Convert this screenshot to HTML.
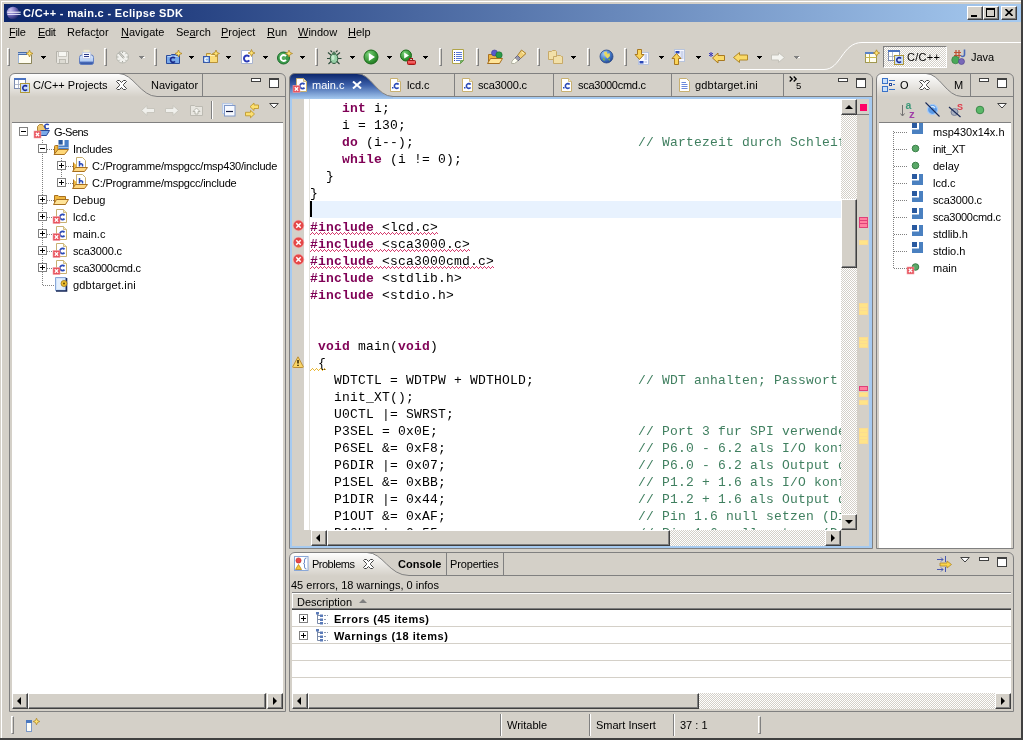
<!DOCTYPE html>
<html><head><meta charset="utf-8"><title>Eclipse</title>
<style>
*{box-sizing:border-box;margin:0;padding:0}
html,body{width:1023px;height:740px;overflow:hidden}
body{background:#d4d0c8;font:11px "Liberation Sans",sans-serif;color:#000;position:relative}
.a{position:absolute}
.t{position:absolute;white-space:nowrap;line-height:13px;height:13px}
u{text-decoration:underline}
.hd{position:absolute;width:3px;height:18px;top:48px;border-left:1px solid #fff;border-top:1px solid #fff;border-right:1px solid #808080;border-bottom:1px solid #808080}
.ar{position:absolute;top:56px;width:5px;height:1px;background:#000}
.ar::before{content:"";position:absolute;left:1px;top:1px;width:3px;height:1px;background:inherit}
.ar::after{content:"";position:absolute;left:2px;top:2px;width:1px;height:1px;background:inherit}
.ar.d{background:#808080;box-shadow:1px 1px 0 #fff}
.ic{position:absolute;width:16px;height:16px;top:49px}
.btn{position:absolute;background:#d4d0c8;border:1px solid;border-color:#fff #404040 #404040 #fff;box-shadow:inset -1px -1px 0 #808080}
.chk{background-image:conic-gradient(#fff 25%,#d4d0c8 0 50%,#fff 0 75%,#d4d0c8 0);background-size:2px 2px}
.code{position:absolute;font:13px "Liberation Mono",monospace;letter-spacing:0.2px;white-space:pre;line-height:17px;height:17px;left:310px;color:#000}
.code b{color:#7f0055}
.cm{position:absolute;font:13px "Liberation Mono",monospace;letter-spacing:0.2px;white-space:pre;line-height:17px;height:17px;left:638px;color:#3f7f5f}
.pm{position:absolute;width:9px;height:9px;border:1px solid #808080;background:#fff}
.pm i{position:absolute;left:1px;top:3px;width:5px;height:1px;background:#000}
.pm s{position:absolute;left:3px;top:1px;width:1px;height:5px;background:#000}
.gerr{width:12px;height:12px}
.gwarn{width:12px;height:12px}
.ovp{width:9px;height:5px;background:#ff80a0;border:1px solid #e0407a}
.ovy{width:9px;height:5px;background:#ffe488;border:1px solid #fbdc90}
.sep{position:absolute;top:714px;width:2px;height:22px;border-left:1px solid #808080;border-right:1px solid #fff}
#root{position:absolute;left:0;top:0;width:1023px;height:740px;will-change:transform}
</style></head><body><div id="root">
<!-- window frame -->
<div class="a" style="left:1px;top:1px;width:1020px;height:1px;background:#fff"></div>
<div class="a" style="left:1px;top:1px;width:1px;height:737px;background:#fff"></div>
<div class="a" style="left:1021px;top:0;width:2px;height:740px;background:#404040"></div>
<div class="a" style="left:0;top:738px;width:1023px;height:2px;background:#404040"></div>
<!-- title bar -->
<div class="a" id="title" style="left:4px;top:4px;width:1017px;height:18px;background:linear-gradient(90deg,#0a246a,#a6caf0)"></div>
<div class="t" style="left:23px;top:7px;color:#fff;font-weight:bold;letter-spacing:0.33px">C/C++ - main.c - Eclipse SDK</div>
<!-- menu -->
<div id="menu">
<div class="t" style="left:9px;top:26px;letter-spacing:-.3px"><u>F</u>ile</div>
<div class="t" style="left:38px;top:26px;letter-spacing:-.4px"><u>E</u>dit</div>
<div class="t" style="left:67px;top:26px">Refac<u>t</u>or</div>
<div class="t" style="left:121px;top:26px"><u>N</u>avigate</div>
<div class="t" style="left:176px;top:26px">Se<u>a</u>rch</div>
<div class="t" style="left:221px;top:26px"><u>P</u>roject</div>
<div class="t" style="left:267px;top:26px"><u>R</u>un</div>
<div class="t" style="left:298px;top:26px"><u>W</u>indow</div>
<div class="t" style="left:348px;top:26px"><u>H</u>elp</div>
</div>
<!-- title buttons -->
<div class="btn" style="left:967px;top:6px;width:16px;height:14px"><div class="a" style="left:3px;top:8px;width:6px;height:2px;background:#000"></div></div>
<div class="btn" style="left:983px;top:6px;width:16px;height:14px"><div class="a" style="left:2px;top:1px;width:9px;height:9px;border:1px solid #000;border-top-width:2px"></div></div>
<div class="btn" style="left:1001px;top:6px;width:16px;height:14px"><svg class="a" style="left:3px;top:2px" width="8" height="7" viewBox="0 0 8 7"><path d="M0.5 0L7.5 7M7.5 0L0.5 7" stroke="#000" stroke-width="1.6" fill="none"/></svg></div>
<svg class="a" style="left:5px;top:5px" width="17" height="16" viewBox="0 0 17 16"><defs><radialGradient id="eg" cx=".3" cy=".25" r=".85"><stop offset="0" stop-color="#c8c0f0"/><stop offset=".5" stop-color="#7068b8"/><stop offset="1" stop-color="#141e60"/></radialGradient></defs><circle cx="8" cy="8" r="6.300" fill="url(#eg)"/><rect x="2.200" y="6.700" width="13.500" height="1" fill="#fff"/><rect x="2.500" y="8.900" width="13.200" height="1" fill="#e8e8ff"/></svg>
<!-- toolbar -->
<div id="toolbar">
<div class="hd" style="left:7px"></div>
<div class="ic" id="i_new" style="left:17px"><svg width="16" height="16" viewBox="0 0 16 16" style="display:block;overflow:visible"><rect x="1.500" y="3.500" width="13" height="11" fill="#fffdf0" stroke="#d8d0a0"/><path d="M1.500 14.500H14.500V6" stroke="#8a845a" fill="none"/><path d="M1.500 14V3.500" stroke="#9ab4dc"/><rect x="1" y="3" width="9" height="1" fill="#4a6ea8"/><rect x="1" y="5" width="9" height="1" fill="#4a6ea8"/><rect x="1" y="4" width="9" height="1" fill="#a8c0e8"/><path d="M12.5 1.0L13.5 3.5L16.0 4.5L13.5 5.5L12.5 8.0L11.5 5.5L9.0 4.5L11.5 3.5Z" fill="#ffe470" stroke="#b08828" stroke-width=".8"/></svg></div><div class="ar" style="left:41px"></div>
<div class="ic" id="i_save" style="left:55px"><svg width="16" height="16" viewBox="0 0 16 16" style="display:block;overflow:visible"><path d="M1.500 2.500H13.500V14.500H2.500L1.500 13.500Z" fill="#e8e6e0" stroke="#b4b2aa"/><rect x="3.500" y="2.500" width="8" height="5" fill="#f6f6f2" stroke="#c0beb6" stroke-width=".8"/><rect x="4.500" y="10.500" width="6" height="4" fill="#dcdad2" stroke="#b4b2aa" stroke-width=".8"/></svg></div>
<div class="ic" id="i_print" style="left:79px"><svg width="16" height="16" viewBox="0 0 16 16" style="display:block;overflow:visible"><defs><linearGradient id="pg" x1="0" y1="0" x2="0" y2="1"><stop offset="0" stop-color="#dce8fc"/><stop offset=".62" stop-color="#b4cef4"/><stop offset=".78" stop-color="#4668b8"/><stop offset="1" stop-color="#34549c"/></linearGradient></defs><path d="M4.500 4V.8H10.500V4Z" fill="#f4f0d0" opacity=".75"/><path d="M.5 8.500Q.5 6 3 6H12.500Q14.500 6 14.500 8.500V13.500Q14.500 15.500 12.500 15.500H2.500Q.5 15.500 .5 13.500Z" fill="url(#pg)" stroke="#5a78c0" stroke-width=".9"/><rect x="3.500" y="3.500" width="8" height="6" fill="#f6f8ff" stroke="#c0cce8" stroke-width=".8"/><path d="M5 5.500H10M5 7.500H10" stroke="#2a3a88" stroke-width="1"/></svg></div>
<div class="hd" style="left:104px"></div>
<div class="ic" id="i_build" style="left:115px"><svg width="16" height="16" viewBox="0 0 16 16" style="display:block;overflow:visible"><circle cx="7.500" cy="8" r="6" fill="#f2f2ee" stroke="#b8b8b0"/><path d="M7.500 2.500V4M7.500 12V13.500M2 8H3.500M11.500 8H13M3.600 4.100L4.700 5.200M11.400 4.100L10.300 5.200M3.600 11.900L4.700 10.800M11.400 11.900L10.300 10.800" stroke="#a8a8a0"/><path d="M4 3.500L9 9" stroke="#a0a098" stroke-width="2"/><path d="M4 3.500L9 9" stroke="#e8e8e4" stroke-width=".8"/></svg></div><div class="ar d" style="left:139px"></div>
<div class="hd" style="left:154px"></div>
<div class="ic" id="i_newcprj" style="left:166px"><svg width="16" height="16" viewBox="0 0 16 16" style="display:block;overflow:visible"><path d="M.5 6.500H4.500L5.500 5.500H9.500L10.500 6.500H13.500V14.500H.5Z" fill="#7aaaea" stroke="#2a4a9a"/><path d="M1.500 7.500H12.500" stroke="#b8d4f8"/><path d="M8.92 9.19A2.5 2.5 0 1 0 8.92 12.41" fill="none" stroke="#1a2a8a" stroke-width="1.7"/><path d="M12.5 1.0L13.5 3.5L16.0 4.5L13.5 5.5L12.5 8.0L11.5 5.5L9.0 4.5L11.5 3.5Z" fill="#ffe470" stroke="#b08828" stroke-width=".8"/></svg></div><div class="ar" style="left:189px"></div>
<div class="ic" id="i_newfld" style="left:203px"><svg width="16" height="16" viewBox="0 0 16 16" style="display:block;overflow:visible"><path d="M3.500 4.500H7.500L8.500 5.500H14.500V13.500H3.500Z" fill="#fadc78" stroke="#b8923a"/><path d="M4.500 6.500H13.500" stroke="#fff0b0"/><rect x=".5" y="7.500" width="6" height="6" fill="#8ab4ec" stroke="#3a5aa8"/><path d="M4.90 9.41A1.7 1.7 0 1 0 4.90 11.59" fill="none" stroke="#fff" stroke-width="1.2"/><path d="M13 1.0L14 3.5L16.5 4.5L14 5.5L13 8.0L12 5.5L9.5 4.5L12 3.5Z" fill="#ffe470" stroke="#b08828" stroke-width=".8"/></svg></div><div class="ar" style="left:226px"></div>
<div class="ic" id="i_newcfile" style="left:240px"><svg width="16" height="16" viewBox="0 0 16 16" style="display:block;overflow:visible"><path d="M1.500 1.500H9.500L12.500 4.500V14.500H1.500Z" fill="#fff" stroke="#a8b4d0"/><path d="M9.30 7.57A3 3 0 1 0 9.30 11.43" fill="none" stroke="#2a3ab8" stroke-width="2"/><path d="M11.5 0.5L12.5 3L15.0 4L12.5 5L11.5 7.5L10.5 5L8.0 4L10.5 3Z" fill="#ffe470" stroke="#b08828" stroke-width=".8"/></svg></div><div class="ar" style="left:263px"></div>
<div class="ic" id="i_newclass" style="left:277px"><svg width="16" height="16" viewBox="0 0 16 16" style="display:block;overflow:visible"><circle cx="6.500" cy="9" r="6" fill="#3a9a4a" stroke="#1a6a2a"/><circle cx="5.500" cy="7.500" r="3.500" fill="#6ac070" opacity=".5"/><path d="M9.00 7.07A3 3 0 1 0 9.00 10.93" fill="none" stroke="#fff" stroke-width="1.9"/><path d="M12 1.0L13 3.5L15.5 4.5L13 5.5L12 8.0L11 5.5L8.5 4.5L11 3.5Z" fill="#ffe470" stroke="#b08828" stroke-width=".8"/></svg></div><div class="ar" style="left:300px"></div>
<div class="hd" style="left:315px"></div>
<div class="ic" id="i_debug" style="left:326px"><svg width="16" height="16" viewBox="0 0 16 16" style="display:block;overflow:visible"><path d="M8 4.500V2.500M5 6L2 3.500M11 6L14 3.500M4.500 9.500H1M11.500 9.500H15.500M5 12.500L2.500 15M11 12.500L13.500 15M6 3L4.500 1.500M10 3L11.500 1.500" stroke="#2a4a3a" stroke-width="1.100" fill="none"/><ellipse cx="8" cy="9.500" rx="3.800" ry="5" fill="#98d0a8" stroke="#2a5a3a"/><ellipse cx="8" cy="4.500" rx="2" ry="1.500" fill="#4a7a5a"/><ellipse cx="7" cy="8.500" rx="1.500" ry="2.500" fill="#c8ecd0"/></svg></div><div class="ar" style="left:350px"></div>
<div class="ic" id="i_run" style="left:363px"><svg width="16" height="16" viewBox="0 0 16 16" style="display:block;overflow:visible"><defs><radialGradient id="rg" cx=".35" cy=".3" r=".8"><stop offset="0" stop-color="#7ad07a"/><stop offset=".6" stop-color="#3a9a3a"/><stop offset="1" stop-color="#1a701a"/></radialGradient></defs><circle cx="8" cy="8" r="7" fill="url(#rg)" stroke="#1a6a1a"/><path d="M5.800 4L12 8L5.800 12Z" fill="#fff"/></svg></div><div class="ar" style="left:387px"></div>
<div class="ic" id="i_ext" style="left:400px"><svg width="16" height="16" viewBox="0 0 16 16" style="display:block;overflow:visible"><circle cx="6" cy="6.500" r="5.500" fill="url(#rg)" stroke="#1a6a1a"/><path d="M4.200 3.500L9 6.500L4.200 9.500Z" fill="#fff"/><rect x="9.500" y="9.500" width="3" height="2" fill="none" stroke="#a01818"/><rect x="7.500" y="11.500" width="8" height="4" rx="1" fill="#e83838" stroke="#a01818"/><path d="M8 13H15" stroke="#f8a0a0" stroke-width=".8"/></svg></div><div class="ar" style="left:423px"></div>
<div class="hd" style="left:439px"></div>
<div class="ic" id="i_doc" style="left:450px"><svg width="16" height="16" viewBox="0 0 16 16" style="display:block;overflow:visible"><path d="M2.500 .5H13.500V11.500L10.500 14.500H2.500Z" fill="#fff" stroke="#b0a448"/><path d="M13.500 11.500H10.500V14.500Z" fill="#7ab868" stroke="#5a9848" stroke-width=".8"/><path d="M6 3.500H12M6 5.500H12M6 7.500H12M6 9.500H12M6 11.500H10" stroke="#5a7ad8"/><path d="M4 3.500H5M4 5.500H5M4 7.500H5M4 9.500H5M4 11.500H5" stroke="#2a3a98"/></svg></div>
<div class="hd" style="left:476px"></div>
<div class="ic" id="i_opentype" style="left:487px"><svg width="16" height="16" viewBox="0 0 16 16" style="display:block;overflow:visible"><path d="M1.500 5.500H5L6 6.500H12.500V14H1.500Z" fill="#f0b840" stroke="#a87020"/><circle cx="7.500" cy="4" r="3" fill="#5a5acc" stroke="#3a3a98" stroke-width=".6"/><circle cx="12" cy="6" r="3.200" fill="#2a9a4a" stroke="#1a6a2a" stroke-width=".6"/><path d="M.5 14.500L3.500 9.500H15.500L12.500 14.500Z" fill="#ffe498" stroke="#a87020"/></svg></div>
<div class="ic" id="i_wand" style="left:511px"><svg width="16" height="16" viewBox="0 0 16 16" style="display:block;overflow:visible"><path d="M10.500 1L15 4.500L9.500 9.500L6.500 6.500Z" fill="#f0d078" stroke="#a88030"/><path d="M6.500 6.500L9.500 9.500L7 12L4 9Z" fill="#9898b0" stroke="#686880"/><path d="M4 9L7 12L3.500 14.500L.5 14.500L1 12Z" fill="#fffff4" stroke="#b0b0a0"/><path d="M11 3L13 4.500" stroke="#fff4c0"/></svg></div>
<div class="hd" style="left:537px"></div>
<div class="ic" id="i_fld" style="left:548px"><svg width="16" height="16" viewBox="0 0 16 16" style="display:block;overflow:visible"><path d="M.5 2.500H3.500L4.500 1.500H7.500L8.500 2.500V10.500H.5Z" fill="#f2e0a8" stroke="#c8aa68"/><path d="M5.500 7.500H8.500L9.500 6.500H12.500L13.500 7.500H14.500V14.500H5.500Z" fill="#f2e0a8" stroke="#c8aa68"/></svg></div><div class="ar" style="left:571px"></div>
<div class="hd" style="left:587px"></div>
<div class="ic" id="i_globe" style="left:599px"><svg width="16" height="16" viewBox="0 0 16 16" style="display:block;overflow:visible"><defs><radialGradient id="gg" cx=".35" cy=".3" r=".8"><stop offset="0" stop-color="#a8d0f8"/><stop offset=".5" stop-color="#4a82d0"/><stop offset="1" stop-color="#1a3a88"/></radialGradient></defs><circle cx="7.500" cy="7.500" r="6.500" fill="url(#gg)" stroke="#2a4a88" stroke-width=".8"/><path d="M5 3L7.500 2.500L8.500 5L10.500 4L11 7L8.500 9.500L7 8L5.500 6Z" fill="#e8d860"/><path d="M4 8.500L6 10L5.500 12L4 11Z" fill="#7ab848"/><path d="M9 10.500L11 9.500L10.500 12Z" fill="#7ab848"/></svg></div>
<div class="hd" style="left:624px"></div>
<div class="ic" id="i_nexta" style="left:635px"><svg width="16" height="16" viewBox="0 0 16 16" style="display:block;overflow:visible"><rect x="3.500" y="3.500" width="10" height="12" fill="#f8f8ff" stroke="#b8c4dc"/><path d="M9.500 6H12M9.500 8H12M9.500 10H12M9.500 13H12" stroke="#8aa0d0" stroke-width=".8"/><rect x="4.500" y="12" width="4" height="2.500" fill="#2a48b8"/><path d="M2.500 .5H6.500V5.500H9L4.500 10.500L0 5.500H2.500Z" fill="#fad458" stroke="#a87820"/></svg></div><div class="ar" style="left:659px"></div>
<div class="ic" id="i_preva" style="left:672px"><svg width="16" height="16" viewBox="0 0 16 16" style="display:block;overflow:visible"><rect x="2.500" y=".5" width="10" height="12" fill="#f8f8ff" stroke="#b8c4dc"/><path d="M8.500 3H11.500M8.500 5H11.500M8.500 7H11.500M8.500 9H11.500" stroke="#8aa0d0" stroke-width=".8"/><rect x="3.500" y="2" width="4" height="2.500" fill="#2a48b8"/><path d="M4.500 4.500L9 9.500H6.500V15.500H2.500V9.500H0Z" fill="#fad458" stroke="#a87820"/></svg></div><div class="ar" style="left:696px"></div>
<div class="ic" id="i_lastedit" style="left:709px"><svg width="16" height="16" viewBox="0 0 16 16" style="display:block;overflow:visible"><path d="M2 3V8M0 4.200L4 6.800M4 4.200L0 6.800" stroke="#3a3ab8" stroke-width="1"/><path d="M3.500 9L9 4V6.500H15.500V11.500H9V14Z" fill="#fada68" stroke="#a87820"/></svg></div>
<div class="ic" id="i_back" style="left:733px"><svg width="16" height="16" viewBox="0 0 16 16" style="display:block;overflow:visible"><path d="M.5 8.500L6.500 3.500V6H14.500V11H6.500V13.500Z" fill="#fada68" stroke="#b08828"/></svg></div><div class="ar" style="left:757px"></div>
<div class="ic" id="i_fwd" style="left:770px"><svg width="16" height="16" viewBox="0 0 16 16" style="display:block;overflow:visible"><path d="M14.500 8.500L8.500 3.500V6H1.500V11H8.500V13.500Z" fill="#f4f4f0" stroke="#c4c2ba"/></svg></div><div class="ar d" style="left:794px"></div>
</div>
<!-- perspective bar -->
<svg class="a" style="left:740px;top:40px" width="281" height="33" viewBox="0 0 281 33"><path d="M0 29.5H84C101 29.5 102 2.5 122 2.5H281" fill="none" stroke="#fff" stroke-width="1"/></svg>
<div class="ic" id="i_openpersp" style="left:864px"><svg width="16" height="16" viewBox="0 0 16 16" style="display:block;overflow:visible"><rect x="1.500" y="3.500" width="11" height="10" fill="#fffef0" stroke="#a09850"/><rect x="1" y="3" width="12" height="2" fill="#5a82c8"/><path d="M1.500 8.500H12.500M5.500 5V13.500" stroke="#c8b850"/><path d="M12.5 0.7999999999999998L13.5 3L15.7 4L13.5 5L12.5 7.2L11.5 5L9.3 4L11.5 3Z" fill="#ffe470" stroke="#b08828" stroke-width=".8"/></svg></div>
<div class="a chk" style="left:883px;top:46px;width:64px;height:22px;border:1px solid;border-color:#808080 #fff #fff #808080"></div>
<div class="ic" id="i_cpersp" style="left:888px"><svg width="16" height="16" viewBox="0 0 16 16" style="display:block;overflow:visible"><rect x=".5" y="1.500" width="11" height="10" fill="#fff" stroke="#7a8ab0"/><rect x="0" y="1" width="12" height="2" fill="#4a72c0"/><path d="M4.500 3V11.500M.5 7.500H11.500" stroke="#a0a8c0" stroke-width=".8"/><rect x="6.500" y="6.500" width="9" height="9" fill="#c8dcf8" stroke="#b09838"/><path d="M13.04 9.46A2.4 2.4 0 1 0 13.04 12.54" fill="none" stroke="#1a2a98" stroke-width="1.6"/></svg></div>
<div class="t" style="left:907px;top:51px;letter-spacing:.3px">C/C++</div>
<div class="ic" id="i_java" style="left:951px"><svg width="16" height="16" viewBox="0 0 16 16" style="display:block;overflow:visible"><path d="M3 3.500H10M3 6.500H10M5 1V9M8 1V9" stroke="#c05030" stroke-width="1.200"/><path d="M13.500 .5V5.500Q13.500 7.500 11.500 7.500Q10.500 7.500 10 6.500" fill="none" stroke="#4a6ab8" stroke-width="1.600"/><circle cx="4.500" cy="11" r="3.800" fill="#4aa858" stroke="#2a7838" stroke-width=".6"/><circle cx="10.500" cy="12.500" r="3" fill="#7868b8" stroke="#4a3a88" stroke-width=".6"/></svg></div>
<div class="t" style="left:971px;top:51px">Java</div>
<!--TOOLBAR_END-->
<!-- LEFT PANEL -->
<div id="left">
<svg class="a" style="left:9px;top:73px" width="278" height="640" viewBox="0 0 278 640">
<defs><linearGradient id="tg" x1="0" y1="0" x2="0" y2="1"><stop offset="0" stop-color="#ffffff"/><stop offset="1" stop-color="#d4d0c8"/></linearGradient></defs>
<path d="M0.5 24V6C0.5 2.5 3 0.5 6 0.5H110C124 0.5 132 23.5 148 23.5H0.5Z" fill="url(#tg)"/>
<path d="M0.5 638.5V6C0.5 2.5 3 0.5 6 0.5H271C274 0.5 276.5 2.5 276.5 6V638.5Z" fill="none" stroke="#808080"/>
<path d="M110 0.5C124 0.5 132 23.5 148 23.5H276.5" fill="none" stroke="#808080"/>
<path d="M193.5 1V23" stroke="#808080"/>
</svg>
<div class="ic" id="i_cprojects" style="left:14px;top:77px"><svg width="16" height="16" viewBox="0 0 16 16" style="display:block;overflow:visible"><rect x=".5" y="1.500" width="11" height="10" fill="#fff" stroke="#7a8ab0"/><rect x="0" y="1" width="12" height="2" fill="#4a72c0"/><path d="M4.500 3V11.500M.5 7.500H11.500" stroke="#a0a8c0" stroke-width=".8"/><rect x="6.500" y="6.500" width="9" height="9" fill="#c8dcf8" stroke="#b09838"/><path d="M13.04 9.46A2.4 2.4 0 1 0 13.04 12.54" fill="none" stroke="#1a2a98" stroke-width="1.6"/></svg></div>
<div class="t" style="left:33px;top:79px">C/C++ Projects</div>
<svg class="a" id="x_left" style="left:116px;top:80px" width="11" height="10" viewBox="0 0 11 10"><path d="M1.5 .5H3.5L5.5 2.5L7.5 .5H9.5L10.5 1.5L7.5 4.5V5.5L10.5 8.5L9.5 9.5H7.5L5.5 7.5L3.5 9.5H1.5L.5 8.5L3.5 5.5V4.5L.5 1.5Z" fill="#fff" stroke="#404040" stroke-width="1"/></svg>
<div class="t" style="left:151px;top:79px">Navigator</div>
<div class="a" style="left:251px;top:78px;width:10px;height:4px;border:1px solid #404040;background:#fff"></div>
<div class="a" style="left:269px;top:78px;width:10px;height:10px;border:1px solid #404040;border-top-width:2px;background:#fff"></div>
<!-- view toolbar -->
<div class="ic" id="i_vback" style="left:140px;top:102px"><svg width="16" height="16" viewBox="0 0 16 16" style="display:block;overflow:visible"><path d="M1.500 8.500L7 3.500V6.500H14.500V10.500H7V13.500Z" fill="#f0f0ec" stroke="#c8c6be"/></svg></div>
<div class="ic" id="i_vfwd" style="left:164px;top:102px"><svg width="16" height="16" viewBox="0 0 16 16" style="display:block;overflow:visible"><path d="M14.500 8.500L9 3.500V6.500H1.500V10.500H9V13.500Z" fill="#f0f0ec" stroke="#c8c6be"/></svg></div>
<div class="ic" id="i_vup" style="left:189px;top:102px"><svg width="16" height="16" viewBox="0 0 16 16" style="display:block;overflow:visible"><path d="M1.500 3.500H5.500L6.500 4.500H13.500V13.500H1.500Z" fill="#e8e6e0" stroke="#bcbab2"/><path d="M7.500 6L11 9.500H9V12H6V9.500H4Z" fill="#f8f8f4" stroke="#a8a8a0" stroke-width=".8"/></svg></div>
<div class="a" style="left:211px;top:101px;width:2px;height:18px;border-left:1px solid #808080;border-right:1px solid #fff"></div>
<div class="ic" id="i_collapse" style="left:221px;top:102px"><svg width="16" height="16" viewBox="0 0 16 16" style="display:block;overflow:visible"><rect x="1.500" y="1.500" width="10" height="10" fill="#e4ecf8" stroke="#b8c8e4"/><rect x="3.500" y="3.500" width="10.500" height="10.500" fill="#f8faff" stroke="#8098c8"/><path d="M5 9.500H12" stroke="#101840" stroke-width="1.200"/></svg></div>
<div class="ic" id="i_link" style="left:244px;top:102px"><svg width="16" height="16" viewBox="0 0 16 16" style="display:block;overflow:visible"><path d="M6 4.700L10 1V3H14.500V6.500H10V8.500Z" fill="#fce070" stroke="#c09830" stroke-width=".9"/><path d="M10.500 12L6.500 8.300V10.300H1.500V13.800H6.500V15.800Z" fill="#fce070" stroke="#c09830" stroke-width=".9"/></svg></div>
<svg class="a" style="left:269px;top:103px" width="10" height="6" viewBox="0 0 10 6"><path d="M.7 .5H9.3L5 5Z" fill="#fff" stroke="#404040"/></svg>
<!-- tree -->
<div class="a" style="left:12px;top:122px;width:271px;height:571px;border-top:1px solid #808080;background:#fff"></div>
<div id="tree">
<svg class="a" style="left:12px;top:122px" width="100" height="175" viewBox="0 0 100 175" shape-rendering="crispEdges">
<g stroke="#808080" stroke-dasharray="1 1" fill="none">
<path d="M30.5 18V163M30.5 27.5H44M30.5 78.5H44M30.5 95.5H44M30.5 112.5H44M30.5 129.5H44M30.5 146.5H44M30.5 163.5H44"/>
<path d="M49.5 36V61M49.5 44.5H63M49.5 61.5H63"/>
</g>
</svg>
<div class="pm" style="left:19px;top:127px"><i></i></div>
<div class="pm" style="left:38px;top:144px"><i></i></div>
<div class="pm p" style="left:57px;top:161px"><i></i><s></s></div>
<div class="pm p" style="left:57px;top:178px"><i></i><s></s></div>
<div class="pm p" style="left:38px;top:195px"><i></i><s></s></div>
<div class="pm p" style="left:38px;top:212px"><i></i><s></s></div>
<div class="pm p" style="left:38px;top:229px"><i></i><s></s></div>
<div class="pm p" style="left:38px;top:246px"><i></i><s></s></div>
<div class="pm p" style="left:38px;top:263px"><i></i><s></s></div>
<div class="ic ti_prj" style="left:34px;top:123px"><svg width="16" height="16" viewBox="0 0 16 16" style="display:block;overflow:visible"><path d="M3.500 3.500L5.500 1.500H8.500L9.500 3.500H11.500V8H3.500Z" fill="#f0c870" stroke="#b08838"/><path d="M4 12.500L6.500 7.500H15.500L12.500 12.500Z" fill="#7aaaea" stroke="#2a4a9a"/><path d="M14.76 2.02A2.3 2.3 0 1 0 14.76 4.98" fill="none" stroke="#2a4ab8" stroke-width="1.5"/><rect x="0" y="8" width="7" height="7" fill="#e8505a" stroke="#f0a0a8" stroke-width=".6"/><path d="M1.8 9.8L5.2 13.2M5.2 9.8L1.8 13.2" stroke="#fff" stroke-width="1.3"/></svg></div><div class="t" style="left:54px;top:126px;letter-spacing:-0.55px">G-Sens</div>
<div class="ic ti_inc" style="left:53px;top:140px"><svg width="16" height="16" viewBox="0 0 16 16" style="display:block;overflow:visible"><path d="M1.500 6.500Q1.500 5.500 2.500 5.500H5V14H1.500Z" fill="#f0b840" stroke="#a87020"/><rect x="5.500" y="0" width="4.200" height="4.600" fill="#2a5aa0"/><path d="M11.500 0H15.700V9H5.500V5.500H11.500Z" fill="#4a80c8"/><path d="M5.500 7.500H15.700" stroke="#c8dcf4" stroke-width=".7"/><path d="M1 14.500L5 9.500H15.500L11.500 14.500Z" fill="#ffd878" stroke="#a87020"/></svg></div><div class="t" style="left:73px;top:143px;letter-spacing:-0.2px">Includes</div>
<div class="ic ti_incf" style="left:72px;top:157px"><svg width="16" height="16" viewBox="0 0 16 16" style="display:block;overflow:visible"><path d="M1.500 5.500V14H11.500" fill="#f0b840" stroke="#a87020"/><path d="M4.500 .5H10.500L13.500 3.500V11.500H4.500Z" fill="#fff" stroke="#c8b070"/><path d="M7.500 4V9.500M7.500 7.500Q9 6 10.500 7.500V9.500" stroke="#2a4ab8" stroke-width="1.500" fill="none"/><path d="M.5 14.500L3.500 10.500H15.500L12.500 14.500Z" fill="#ffd880" stroke="#a87020"/></svg></div><div class="t" style="left:92px;top:160px;letter-spacing:-0.22px">C:/Programme/mspgcc/msp430/include</div>
<div class="ic ti_incf" style="left:72px;top:174px"><svg width="16" height="16" viewBox="0 0 16 16" style="display:block;overflow:visible"><path d="M1.500 5.500V14H11.500" fill="#f0b840" stroke="#a87020"/><path d="M4.500 .5H10.500L13.500 3.500V11.500H4.500Z" fill="#fff" stroke="#c8b070"/><path d="M7.500 4V9.500M7.500 7.500Q9 6 10.500 7.500V9.500" stroke="#2a4ab8" stroke-width="1.500" fill="none"/><path d="M.5 14.500L3.500 10.500H15.500L12.500 14.500Z" fill="#ffd880" stroke="#a87020"/></svg></div><div class="t" style="left:92px;top:177px;letter-spacing:-0.22px">C:/Programme/mspgcc/include</div>
<div class="ic ti_fld" style="left:53px;top:191px"><svg width="16" height="16" viewBox="0 0 16 16" style="display:block;overflow:visible"><path d="M1.500 4.500H5L6 5.500H12.500V13H1.500Z" fill="#f0b840" stroke="#a87020"/><path d="M.5 13.500L3.500 8.500H15.500L12.500 13.500Z" fill="#ffe498" stroke="#a87020"/></svg></div><div class="t" style="left:73px;top:194px">Debug</div>
<div class="ic ti_cerr" style="left:53px;top:208px"><svg width="16" height="16" viewBox="0 0 16 16" style="display:block;overflow:visible"><path d="M3.5 1.500H10.5L13.5 4.500V14.500H3.5Z" fill="#fff" stroke="#c8b070"/><path d="M10.5 1.500V4.500H13.5" fill="#f0e8c0" stroke="#c8b070" stroke-width=".8"/><path d="M11.49 7.33A2.6 2.6 0 1 0 11.49 10.67" fill="none" stroke="#2a4ab8" stroke-width="1.7"/><rect x="0" y="8.5" width="7" height="7" fill="#e8505a" stroke="#f0a0a8" stroke-width=".6"/><path d="M1.8 10.3L5.2 13.7M5.2 10.3L1.8 13.7" stroke="#fff" stroke-width="1.3"/></svg></div><div class="t" style="left:73px;top:211px">lcd.c</div>
<div class="ic ti_cerr" style="left:53px;top:225px"><svg width="16" height="16" viewBox="0 0 16 16" style="display:block;overflow:visible"><path d="M3.5 1.500H10.5L13.5 4.500V14.500H3.5Z" fill="#fff" stroke="#c8b070"/><path d="M10.5 1.500V4.500H13.5" fill="#f0e8c0" stroke="#c8b070" stroke-width=".8"/><path d="M11.49 7.33A2.6 2.6 0 1 0 11.49 10.67" fill="none" stroke="#2a4ab8" stroke-width="1.7"/><rect x="0" y="8.5" width="7" height="7" fill="#e8505a" stroke="#f0a0a8" stroke-width=".6"/><path d="M1.8 10.3L5.2 13.7M5.2 10.3L1.8 13.7" stroke="#fff" stroke-width="1.3"/></svg></div><div class="t" style="left:73px;top:228px">main.c</div>
<div class="ic ti_cerr" style="left:53px;top:242px"><svg width="16" height="16" viewBox="0 0 16 16" style="display:block;overflow:visible"><path d="M3.5 1.500H10.5L13.5 4.500V14.500H3.5Z" fill="#fff" stroke="#c8b070"/><path d="M10.5 1.500V4.500H13.5" fill="#f0e8c0" stroke="#c8b070" stroke-width=".8"/><path d="M11.49 7.33A2.6 2.6 0 1 0 11.49 10.67" fill="none" stroke="#2a4ab8" stroke-width="1.7"/><rect x="0" y="8.5" width="7" height="7" fill="#e8505a" stroke="#f0a0a8" stroke-width=".6"/><path d="M1.8 10.3L5.2 13.7M5.2 10.3L1.8 13.7" stroke="#fff" stroke-width="1.3"/></svg></div><div class="t" style="left:73px;top:245px;letter-spacing:-0.13px">sca3000.c</div>
<div class="ic ti_cerr" style="left:53px;top:259px"><svg width="16" height="16" viewBox="0 0 16 16" style="display:block;overflow:visible"><path d="M3.5 1.500H10.5L13.5 4.500V14.500H3.5Z" fill="#fff" stroke="#c8b070"/><path d="M10.5 1.500V4.500H13.5" fill="#f0e8c0" stroke="#c8b070" stroke-width=".8"/><path d="M11.49 7.33A2.6 2.6 0 1 0 11.49 10.67" fill="none" stroke="#2a4ab8" stroke-width="1.7"/><rect x="0" y="8.5" width="7" height="7" fill="#e8505a" stroke="#f0a0a8" stroke-width=".6"/><path d="M1.8 10.3L5.2 13.7M5.2 10.3L1.8 13.7" stroke="#fff" stroke-width="1.3"/></svg></div><div class="t" style="left:73px;top:262px;letter-spacing:-0.27px">sca3000cmd.c</div>
<div class="ic ti_ini" style="left:53px;top:276px"><svg width="16" height="16" viewBox="0 0 16 16" style="display:block;overflow:visible"><path d="M2.500 1.500H13V14.500H2.500Z" fill="#d0e4fc" stroke="#8aa8d8"/><path d="M13.500 2V15H3" stroke="#1a2a58" stroke-width="1.600" fill="none"/><path d="M4 4H9M4 6H8M4 8H8M4 10H9M4 12H10" stroke="#fff" stroke-width=".9"/><circle cx="11" cy="7.500" r="3" fill="#f0c030" stroke="#a07818" stroke-width=".8"/><circle cx="11" cy="7.500" r="1" fill="#604808"/></svg></div><div class="t" style="left:73px;top:279px;letter-spacing:0.18px">gdbtarget.ini</div>
</div>
<!-- hscroll -->
<div class="a" style="left:12px;top:693px;width:271px;height:16px;background:#d4d0c8"></div>
<div class="btn" style="left:12px;top:693px;width:16px;height:16px"><div class="a" style="left:4px;top:3px;border-top:4px solid transparent;border-bottom:4px solid transparent;border-right:4px solid #000"></div></div>
<div class="btn" style="left:28px;top:693px;width:238px;height:16px"></div>
<div class="btn" style="left:267px;top:693px;width:16px;height:16px"><div class="a" style="left:5px;top:3px;border-top:4px solid transparent;border-bottom:4px solid transparent;border-left:4px solid #000"></div></div>
</div>
<!--LEFT_END-->
<!-- EDITOR PANEL -->
<div id="editor">
<svg class="a" style="left:289px;top:73px" width="585" height="477" viewBox="0 0 585 477">
<defs>
<linearGradient id="eg1" x1="0" y1="0" x2="0" y2="1"><stop offset="0" stop-color="#0a246a"/><stop offset="0.45" stop-color="#3a5ea8"/><stop offset="1" stop-color="#a6caf0"/></linearGradient>
</defs>
<!-- blue frame -->
<path d="M0.5 475V6C0.5 2.5 3 0.5 6 0.5H577C580 0.5 583.5 2.5 583.5 6V475Z" fill="#d4d0c8"/>
<rect x="0" y="23" width="584" height="452.5" fill="#a6caf0"/>
<!-- active tab -->
<path d="M0.5 26V6C0.5 2.5 3 0.5 6 0.5H68C82 0.5 88 23.5 104 23.5V26Z" fill="url(#eg1)"/>
<path d="M68 0.5C82 0.5 88 23.5 104 23.5H583" fill="none" stroke="#808080"/>
<path d="M0.5 475.5V6C0.5 2.5 3 0.5 6 0.5H577C580 0.5 583.5 2.5 583.5 6V475.5Z" fill="none" stroke="#808080"/>
<path d="M165.500 1V23M264.500 1V23M382.500 1V23M494.500 1V23" stroke="#808080"/>
</svg>
<div class="ic ti_cerr" style="left:293px;top:77px"><svg width="16" height="16" viewBox="0 0 16 16" style="display:block;overflow:visible"><path d="M3.5 1.500H10.5L13.5 4.500V14.500H3.5Z" fill="#fff" stroke="#c8b070"/><path d="M10.5 1.500V4.500H13.5" fill="#f0e8c0" stroke="#c8b070" stroke-width=".8"/><path d="M11.49 7.33A2.6 2.6 0 1 0 11.49 10.67" fill="none" stroke="#2a4ab8" stroke-width="1.7"/><rect x="0" y="8.5" width="7" height="7" fill="#e8505a" stroke="#f0a0a8" stroke-width=".6"/><path d="M1.8 10.3L5.2 13.7M5.2 10.3L1.8 13.7" stroke="#fff" stroke-width="1.3"/></svg></div>
<div class="t" style="left:312px;top:79px;color:#fff">main.c</div>
<svg class="a" style="left:352px;top:81px" width="10" height="8" viewBox="0 0 10 8"><path d="M1 .5L9 7.500M9 .5L1 7.500" stroke="#fff" stroke-width="2" fill="none"/></svg>
<div class="ic ti_c" style="left:387px;top:77px"><svg width="16" height="16" viewBox="0 0 16 16" style="display:block;overflow:visible"><path d="M3.5 1.500H10.5L13.5 4.500V14.500H3.5Z" fill="#fff" stroke="#c8b070"/><path d="M10.5 1.500V4.500H13.5" fill="#f0e8c0" stroke="#c8b070" stroke-width=".8"/><path d="M11.64 7.46A2.4 2.4 0 1 0 11.64 10.54" fill="none" stroke="#2a4ab8" stroke-width="1.6"/><rect x="5" y="10" width="1.500" height="1.500" fill="#2a4ab8"/></svg></div><div class="t" style="left:407px;top:79px">lcd.c</div>
<div class="ic ti_c" style="left:459px;top:77px"><svg width="16" height="16" viewBox="0 0 16 16" style="display:block;overflow:visible"><path d="M3.5 1.500H10.5L13.5 4.500V14.500H3.5Z" fill="#fff" stroke="#c8b070"/><path d="M10.5 1.500V4.500H13.5" fill="#f0e8c0" stroke="#c8b070" stroke-width=".8"/><path d="M11.64 7.46A2.4 2.4 0 1 0 11.64 10.54" fill="none" stroke="#2a4ab8" stroke-width="1.6"/><rect x="5" y="10" width="1.500" height="1.500" fill="#2a4ab8"/></svg></div><div class="t" style="left:478px;top:79px;letter-spacing:-0.13px">sca3000.c</div>
<div class="ic ti_c" style="left:558px;top:77px"><svg width="16" height="16" viewBox="0 0 16 16" style="display:block;overflow:visible"><path d="M3.5 1.500H10.5L13.5 4.500V14.500H3.5Z" fill="#fff" stroke="#c8b070"/><path d="M10.5 1.500V4.500H13.5" fill="#f0e8c0" stroke="#c8b070" stroke-width=".8"/><path d="M11.64 7.46A2.4 2.4 0 1 0 11.64 10.54" fill="none" stroke="#2a4ab8" stroke-width="1.6"/><rect x="5" y="10" width="1.500" height="1.500" fill="#2a4ab8"/></svg></div><div class="t" style="left:578px;top:79px;letter-spacing:-0.27px">sca3000cmd.c</div>
<div class="ic ti_txt" style="left:676px;top:77px"><svg width="16" height="16" viewBox="0 0 16 16" style="display:block;overflow:visible"><path d="M3.500 1.500H10.500L13.500 4.500V14.500H3.500Z" fill="#fff" stroke="#c8b070"/><path d="M5.500 5.500H10M5.500 7.500H11.500M5.500 9.500H11.500M5.500 11.500H11.500" stroke="#5a7ad8" stroke-width=".9"/></svg></div><div class="t" style="left:695px;top:79px;letter-spacing:0.18px">gdbtarget.ini</div>
<svg class="a" style="left:789px;top:76px" width="9" height="6" viewBox="0 0 9 6"><path d="M.7 .5L3.200 3L.7 5.500M4.700 .5L7.200 3L4.700 5.500" fill="none" stroke="#000" stroke-width="1.300"/></svg><div class="t" style="left:796px;top:79px;font-size:9.500px">5</div>
<div class="a" style="left:838px;top:78px;width:10px;height:4px;border:1px solid #404040;background:#fff"></div>
<div class="a" style="left:856px;top:78px;width:10px;height:10px;border:1px solid #404040;border-top-width:2px;background:#fff"></div>
<!-- content -->
<div class="a" style="left:292px;top:99px;width:12px;height:447px;background:#d4d0c8"></div>
<div class="a" style="left:304px;top:99px;width:537px;height:431px;background:#fff;overflow:hidden" id="edc">
<div class="a" style="left:5px;top:0;width:1px;height:431px;background:#e4e2dc"></div>
<div class="a" style="left:7px;top:102px;width:530px;height:17px;background:#e8f2fe"></div>
<div class="a" style="left:6px;top:102px;width:2px;height:16px;background:#000"></div>
</div>
<div class="a" id="codewrap" style="left:0;top:0;width:841px;height:530px;overflow:hidden">
<div class="code" style="top:100px">    <b>int</b> i;</div>
<div class="code" style="top:117px">    i = 130;</div>
<div class="code" style="top:134px">    <b>do</b> (i--);</div><div class="cm" style="top:134px">// Wartezeit durch Schleife</div>
<div class="code" style="top:151px">    <b>while</b> (i != 0);</div>
<div class="code" style="top:168px">  }</div>
<div class="code" style="top:185px">}</div>
<div class="code" style="top:219px"><b>#include</b> &lt;lcd.c&gt;</div>
<div class="code" style="top:236px"><b>#include</b> &lt;sca3000.c&gt;</div>
<div class="code" style="top:253px"><b>#include</b> &lt;sca3000cmd.c&gt;</div>
<div class="code" style="top:270px"><b>#include</b> &lt;stdlib.h&gt;</div>
<div class="code" style="top:287px"><b>#include</b> &lt;stdio.h&gt;</div>
<div class="code" style="top:338px"> <b>void</b> main(<b>void</b>)</div>
<div class="code" style="top:355px"> {</div>
<div class="code" style="top:372px">   WDTCTL = WDTPW + WDTHOLD;</div><div class="cm" style="top:372px">// WDT anhalten; Passwort </div>
<div class="code" style="top:389px">   init_XT();</div>
<div class="code" style="top:406px">   U0CTL |= SWRST;</div>
<div class="code" style="top:423px">   P3SEL = 0x0E;</div><div class="cm" style="top:423px">// Port 3 fur SPI verwenden</div>
<div class="code" style="top:440px">   P6SEL &amp;= 0xF8;</div><div class="cm" style="top:440px">// P6.0 - 6.2 als I/O konfi</div>
<div class="code" style="top:457px">   P6DIR |= 0x07;</div><div class="cm" style="top:457px">// P6.0 - 6.2 als Output de</div>
<div class="code" style="top:474px">   P1SEL &amp;= 0xBB;</div><div class="cm" style="top:474px">// P1.2 + 1.6 als I/O konfi</div>
<div class="code" style="top:491px">   P1DIR |= 0x44;</div><div class="cm" style="top:491px">// P1.2 + 1.6 als Output de</div>
<div class="code" style="top:508px">   P1OUT &amp;= 0xAF;</div><div class="cm" style="top:508px">// Pin 1.6 null setzen (Dis</div>
<div class="code" style="top:525px">   P1OUT |= 0x55;</div><div class="cm" style="top:525px">// Pin 1.6 null setzen (Dis</div>
</div>
<svg class="a" width="0" height="0"><defs><pattern id="sqr" width="4" height="3" patternUnits="userSpaceOnUse"><g fill="#d63a6e" shape-rendering="crispEdges"><rect x="0" y="2" width="1" height="1"/><rect x="1" y="1" width="1" height="1"/><rect x="2" y="0" width="1" height="1"/><rect x="3" y="1" width="1" height="1"/></g></pattern><pattern id="sqy" width="4" height="3" patternUnits="userSpaceOnUse"><g fill="#e8b838" shape-rendering="crispEdges"><rect x="0" y="2" width="1" height="1"/><rect x="1" y="1" width="1" height="1"/><rect x="2" y="0" width="1" height="1"/><rect x="3" y="1" width="1" height="1"/></g></pattern></defs></svg>
<svg class="a" style="left:310px;top:232px" width="128" height="3"><rect width="128" height="3" fill="url(#sqr)"/></svg>
<svg class="a" style="left:310px;top:249px" width="160" height="3"><rect width="160" height="3" fill="url(#sqr)"/></svg>
<svg class="a" style="left:310px;top:266px" width="184" height="3"><rect width="184" height="3" fill="url(#sqr)"/></svg>
<svg class="a" style="left:310px;top:368px" width="16" height="3"><rect width="16" height="3" fill="url(#sqy)"/></svg>
<!-- gutter markers -->
<div class="a gerr" style="left:292px;top:220px"><svg width="13" height="13" viewBox="0 0 13 13" style="display:block;overflow:visible"><circle cx="6.500" cy="5.500" r="5.700" fill="#f0b0b0"/><circle cx="6.500" cy="5.500" r="5" fill="#e44848"/><path d="M4.300 3.300L8.700 7.700M8.700 3.300L4.300 7.700" stroke="#fff" stroke-width="1.500"/></svg></div>
<div class="a gerr" style="left:292px;top:237px"><svg width="13" height="13" viewBox="0 0 13 13" style="display:block;overflow:visible"><circle cx="6.500" cy="5.500" r="5.700" fill="#f0b0b0"/><circle cx="6.500" cy="5.500" r="5" fill="#e44848"/><path d="M4.300 3.300L8.700 7.700M8.700 3.300L4.300 7.700" stroke="#fff" stroke-width="1.500"/></svg></div>
<div class="a gerr" style="left:292px;top:254px"><svg width="13" height="13" viewBox="0 0 13 13" style="display:block;overflow:visible"><circle cx="6.500" cy="5.500" r="5.700" fill="#f0b0b0"/><circle cx="6.500" cy="5.500" r="5" fill="#e44848"/><path d="M4.300 3.300L8.700 7.700M8.700 3.300L4.300 7.700" stroke="#fff" stroke-width="1.500"/></svg></div>
<div class="a gwarn" style="left:292px;top:356px"><svg width="13" height="13" viewBox="0 0 13 13" style="display:block;overflow:visible"><path d="M6 .8L11.200 10.500Q11.500 11.500 10.500 11.500H1.500Q.5 11.500 .8 10.500Z" fill="#f8d468" stroke="#b88828" stroke-width=".9"/><path d="M6 4V7.500M6 8.800V10" stroke="#302000" stroke-width="1.500"/></svg></div>
<!-- vscroll -->
<div class="a chk" style="left:841px;top:99px;width:16px;height:431px"></div>
<div class="btn" style="left:841px;top:99px;width:16px;height:16px"><div class="a" style="left:3px;top:5px;border-left:4px solid transparent;border-right:4px solid transparent;border-bottom:4px solid #000"></div></div>
<div class="btn" style="left:841px;top:199px;width:16px;height:69px"></div>
<div class="btn" style="left:841px;top:514px;width:16px;height:16px"><div class="a" style="left:3px;top:5px;border-left:4px solid transparent;border-right:4px solid transparent;border-top:4px solid #000"></div></div>
<!-- hscroll -->
<div class="a" style="left:304px;top:530px;width:7px;height:16px;background:#d4d0c8"></div>
<div class="a chk" style="left:311px;top:530px;width:530px;height:16px"></div>
<div class="btn" style="left:311px;top:530px;width:16px;height:16px"><div class="a" style="left:4px;top:3px;border-top:4px solid transparent;border-bottom:4px solid transparent;border-right:4px solid #000"></div></div>
<div class="btn" style="left:327px;top:530px;width:343px;height:16px"></div>
<div class="btn" style="left:825px;top:530px;width:16px;height:16px"><div class="a" style="left:5px;top:3px;border-top:4px solid transparent;border-bottom:4px solid transparent;border-left:4px solid #000"></div></div>
<div class="a" style="left:841px;top:530px;width:28px;height:16px;background:#d4d0c8"></div>
<!-- overview ruler -->
<div class="a" style="left:857px;top:99px;width:12px;height:431px;background:#d4d0c8"></div>
<div class="a" style="left:857px;top:114px;width:12px;height:1px;background:#808080"></div>
<div class="a" style="left:860px;top:104px;width:7px;height:7px;background:#ff0066"></div>
<div id="ovr">
<div class="a ovp" style="left:859px;top:217px"></div><div class="a ovp" style="left:859px;top:220px"></div><div class="a ovp" style="left:859px;top:223px"></div>
<div class="a ovy" style="left:859px;top:240px"></div>
<div class="a ovy" style="left:859px;top:303px"></div><div class="a ovy" style="left:859px;top:307px"></div><div class="a ovy" style="left:859px;top:310px"></div>
<div class="a ovy" style="left:859px;top:337px"></div><div class="a ovy" style="left:859px;top:340px"></div><div class="a ovy" style="left:859px;top:343px"></div>
<div class="a ovp" style="left:859px;top:386px"></div><div class="a ovy" style="left:859px;top:392px"></div><div class="a ovy" style="left:859px;top:400px"></div>
<div class="a ovy" style="left:859px;top:428px"></div><div class="a ovy" style="left:859px;top:432px"></div><div class="a ovy" style="left:859px;top:436px"></div><div class="a ovy" style="left:859px;top:439px"></div>
</div>
</div>
<!--EDITOR_END-->
<!-- OUTLINE PANEL -->
<div id="outline">
<svg class="a" style="left:876px;top:73px" width="140" height="477" viewBox="0 0 140 477">
<path d="M0.5 24V6C0.5 2.5 3 0.5 6 0.5H50C64 0.500 70 23.500 86 23.5H0.500Z" fill="url(#tg)"/>
<path d="M0.5 475.5V6C0.5 2.5 3 0.5 6 0.5H132C135 0.5 137.500 2.5 137.500 6V475.5Z" fill="none" stroke="#808080"/>
<path d="M50 0.500C64 0.500 70 23.500 86 23.5H137.500" fill="none" stroke="#808080"/>
<path d="M94.500 1V23" stroke="#808080"/>
</svg>
<div class="ic" id="i_outline" style="left:881px;top:77px"><svg width="16" height="16" viewBox="0 0 16 16" style="display:block;overflow:visible"><rect x="1.500" y="1.500" width="5" height="5" fill="#c8e0fc" stroke="#3a72c8"/><rect x="1.500" y="9.500" width="5" height="5" fill="#c8e0fc" stroke="#3a72c8"/><path d="M8 3.500H14M8 12.500H14" stroke="#3a72c8" stroke-width="1"/><rect x="8.500" y="6.500" width="2" height="2" fill="#fff" stroke="#2a4a98"/><path d="M12 7.500H14" stroke="#3a72c8"/></svg></div>
<div class="t" style="left:900px;top:79px">O</div>
<svg class="a" style="left:919px;top:80px" width="11" height="10" viewBox="0 0 11 10"><path d="M1.5 .5H3.5L5.5 2.5L7.5 .5H9.5L10.5 1.5L7.5 4.5V5.500L10.5 8.500L9.5 9.500H7.500L5.500 7.500L3.500 9.500H1.500L.5 8.500L3.500 5.500V4.500L.5 1.500Z" fill="#fff" stroke="#404040" stroke-width="1"/></svg>
<div class="t" style="left:954px;top:79px">M</div>
<div class="a" style="left:979px;top:78px;width:10px;height:4px;border:1px solid #404040;background:#fff"></div>
<div class="a" style="left:997px;top:78px;width:10px;height:10px;border:1px solid #404040;border-top-width:2px;background:#fff"></div>
<div class="ic" id="i_sortaz" style="left:899px;top:102px"><svg width="16" height="16" viewBox="0 0 16 16" style="display:block;overflow:visible"><path d="M3.500 3V13.500M1.500 11.500L3.500 14L5.500 11.500" stroke="#707070" stroke-width="1" fill="none"/><text x="6.500" y="7" font-family="Liberation Sans" font-weight="bold" font-size="10.500" fill="#3a9878">a</text><text x="10" y="15.500" font-family="Liberation Sans" font-weight="bold" font-size="11.500" fill="#a040a8">z</text></svg></div>
<div class="ic" id="i_hidef" style="left:925px;top:102px"><svg width="16" height="16" viewBox="0 0 16 16" style="display:block;overflow:visible"><circle cx="7.500" cy="7.500" r="5" fill="#5a9ae8" stroke="#a8ccf8" stroke-width="1.200"/><path d="M5 6Q7.500 3 10 6" stroke="#d8ecff" stroke-width="1.500" fill="none"/><path d="M.5 .5L14.500 14.500" stroke="#1a2a58" stroke-width="1.100"/></svg></div>
<div class="ic" id="i_hides" style="left:948px;top:102px"><svg width="16" height="16" viewBox="0 0 16 16" style="display:block;overflow:visible"><circle cx="6.500" cy="10" r="3.500" fill="#a8b0c0" stroke="#788098"/><text x="9" y="8" font-family="Liberation Sans" font-weight="bold" font-size="9" fill="#e03848">S</text><path d="M1 5L12.500 15" stroke="#1a2a58" stroke-width="1.100"/></svg></div>
<div class="ic" id="i_gdot" style="left:972px;top:102px"><svg width="16" height="16" viewBox="0 0 16 16" style="display:block;overflow:visible"><circle cx="8" cy="8" r="3.800" fill="#5ab868" stroke="#3a8848"/></svg></div>
<svg class="a" style="left:997px;top:103px" width="10" height="6" viewBox="0 0 10 6"><path d="M.7 .5H9.300L5 5Z" fill="#fff" stroke="#404040"/></svg>
<div class="a" style="left:879px;top:122px;width:132px;height:426px;border-top:1px solid #808080;background:#fff"></div>
<svg class="a" style="left:878px;top:122px" width="40" height="160" viewBox="0 0 40 160" shape-rendering="crispEdges">
<g stroke="#808080" stroke-dasharray="1 1" fill="none"><path d="M15.500 9V147M15.500 10.500H29M15.500 27.500H29M15.500 44.500H29M15.500 61.500H29M15.500 78.500H29M15.500 95.500H29M15.500 112.500H29M15.500 129.500H29M15.500 146.500H29"/></g></svg>
<div class="ic oi_inc" style="left:910px;top:123px"><svg width="16" height="16" viewBox="0 0 16 16" style="display:block;overflow:visible"><rect x="2" y="0" width="5" height="5" fill="#2a5aa0"/><path d="M9 0H13V11H2V6.500H9Z" fill="#4a80c0"/></svg></div><div class="t" style="left:933px;top:126px">msp430x14x.h</div>
<div class="ic oi_fn" style="left:910px;top:140px"><svg width="16" height="16" viewBox="0 0 16 16" style="display:block;overflow:visible"><circle cx="5.500" cy="8.500" r="3.300" fill="#5aa868" stroke="#3a8048"/></svg></div><div class="t" style="left:933px;top:143px;letter-spacing:-0.3px">init_XT</div>
<div class="ic oi_fn" style="left:910px;top:157px"><svg width="16" height="16" viewBox="0 0 16 16" style="display:block;overflow:visible"><circle cx="5.500" cy="8.500" r="3.300" fill="#5aa868" stroke="#3a8048"/></svg></div><div class="t" style="left:933px;top:160px">delay</div>
<div class="ic oi_inc" style="left:910px;top:174px"><svg width="16" height="16" viewBox="0 0 16 16" style="display:block;overflow:visible"><rect x="2" y="0" width="5" height="5" fill="#2a5aa0"/><path d="M9 0H13V11H2V6.500H9Z" fill="#4a80c0"/></svg></div><div class="t" style="left:933px;top:177px">lcd.c</div>
<div class="ic oi_inc" style="left:910px;top:191px"><svg width="16" height="16" viewBox="0 0 16 16" style="display:block;overflow:visible"><rect x="2" y="0" width="5" height="5" fill="#2a5aa0"/><path d="M9 0H13V11H2V6.500H9Z" fill="#4a80c0"/></svg></div><div class="t" style="left:933px;top:194px;letter-spacing:-0.13px">sca3000.c</div>
<div class="ic oi_inc" style="left:910px;top:208px"><svg width="16" height="16" viewBox="0 0 16 16" style="display:block;overflow:visible"><rect x="2" y="0" width="5" height="5" fill="#2a5aa0"/><path d="M9 0H13V11H2V6.500H9Z" fill="#4a80c0"/></svg></div><div class="t" style="left:933px;top:211px;letter-spacing:-0.27px">sca3000cmd.c</div>
<div class="ic oi_inc" style="left:910px;top:225px"><svg width="16" height="16" viewBox="0 0 16 16" style="display:block;overflow:visible"><rect x="2" y="0" width="5" height="5" fill="#2a5aa0"/><path d="M9 0H13V11H2V6.500H9Z" fill="#4a80c0"/></svg></div><div class="t" style="left:933px;top:228px">stdlib.h</div>
<div class="ic oi_inc" style="left:910px;top:242px"><svg width="16" height="16" viewBox="0 0 16 16" style="display:block;overflow:visible"><rect x="2" y="0" width="5" height="5" fill="#2a5aa0"/><path d="M9 0H13V11H2V6.500H9Z" fill="#4a80c0"/></svg></div><div class="t" style="left:933px;top:245px">stdio.h</div>
<div class="ic oi_fnerr" style="left:906px;top:259px"><svg width="16" height="16" viewBox="0 0 16 16" style="display:block;overflow:visible"><circle cx="9.500" cy="8" r="3.300" fill="#5aa868" stroke="#3a8048"/><rect x="1" y="8" width="7" height="7" fill="#e8505a" stroke="#f0a0a8" stroke-width=".6"/><path d="M2.8 9.8L6.2 13.2M6.2 9.8L2.8 13.2" stroke="#fff" stroke-width="1.3"/></svg></div><div class="t" style="left:933px;top:262px">main</div>
</div>
<!-- BOTTOM PANEL -->
<div id="bottom">
<svg class="a" style="left:289px;top:552px" width="727" height="161" viewBox="0 0 727 161">
<path d="M0.5 24V6C0.5 2.5 3 0.5 6 0.5H78C94 0.500 100 23.500 120 23.500H0.500Z" fill="url(#tg)"/>
<path d="M0.5 159.500V6C0.5 2.5 3 0.5 6 0.5H719C722 0.500 724.500 2.500 724.500 6V159.500Z" fill="none" stroke="#808080"/>
<path d="M78 0.500C94 0.500 100 23.500 120 23.500H724.500" fill="none" stroke="#808080"/>
<path d="M157.500 1V23M214.500 1V23" stroke="#808080"/>
</svg>
<div class="ic" id="i_problems" style="left:294px;top:556px"><svg width="16" height="16" viewBox="0 0 16 16" style="display:block;overflow:visible"><rect x=".5" y=".5" width="13.500" height="14" fill="#fff" stroke="#8aa8d8"/><circle cx="4.500" cy="4.500" r="2.600" fill="#e84848" stroke="#b82828" stroke-width=".6"/><path d="M4.500 8.500L7.500 13.500H1.500Z" fill="#f8c838" stroke="#b88818" stroke-width=".8"/><path d="M12.500 2Q10.500 2 10.500 4V6Q10.500 7.500 9.500 7.500Q10.500 7.500 10.500 9V11Q10.500 13 12.500 13" fill="none" stroke="#6a8ac8" stroke-width="1"/></svg></div>
<div class="t" style="left:312px;top:558px;letter-spacing:-0.5px">Problems</div>
<svg class="a" style="left:363px;top:559px" width="11" height="10" viewBox="0 0 11 10"><path d="M1.500 .5H3.500L5.500 2.500L7.500 .5H9.500L10.500 1.500L7.500 4.500V5.500L10.500 8.500L9.500 9.500H7.500L5.500 7.500L3.500 9.500H1.500L.5 8.500L3.500 5.500V4.500L.5 1.500Z" fill="#fff" stroke="#404040" stroke-width="1"/></svg>
<div class="t" style="left:398px;top:558px;font-weight:bold">Console</div>
<div class="t" style="left:450px;top:558px;letter-spacing:-0.15px">Properties</div>
<div class="ic" id="i_filter" style="left:936px;top:556px"><svg width="16" height="16" viewBox="0 0 16 16" style="display:block;overflow:visible"><path d="M1 3.500H7M5 1.500L7 3.500L5 5.500M9.500 0V6" stroke="#4a5ab0" stroke-width="1" fill="none"/><path d="M1 13.500H7M5 11.500L7 13.500L5 15.500M9.500 11V16" stroke="#4a5ab0" stroke-width="1" fill="none"/><path d="M4 7H11V5L15.500 8.500L11 12V10H4Z" fill="#fad448" stroke="#b08828" stroke-width=".8"/></svg></div>
<svg class="a" style="left:960px;top:557px" width="10" height="6" viewBox="0 0 10 6"><path d="M.7 .5H9.300L5 5Z" fill="#fff" stroke="#404040"/></svg>
<div class="a" style="left:979px;top:557px;width:10px;height:4px;border:1px solid #404040;background:#fff"></div>
<div class="a" style="left:997px;top:557px;width:10px;height:10px;border:1px solid #404040;border-top-width:2px;background:#fff"></div>
<div class="t" style="left:291px;top:579px">45 errors, 18 warnings, 0 infos</div>
<div class="a" style="left:292px;top:592px;width:719px;height:101px;border-top:1px solid #808080;background:#fff"></div>
<div class="a" style="left:292px;top:593px;width:719px;height:17px;background:#d4d0c8;border-bottom:1px solid #404040;box-shadow:inset 0 -1px 0 #808080,inset 1px 1px 0 #fff"></div>
<div class="t" style="left:297px;top:596px">Description</div>
<div class="a" style="left:359px;top:599px;border-left:4px solid transparent;border-right:4px solid transparent;border-bottom:4px solid #808080"></div>
<div class="a" style="left:292px;top:626px;width:719px;height:1px;background:#d4d0c8"></div>
<div class="a" style="left:292px;top:643px;width:719px;height:1px;background:#d4d0c8"></div>
<div class="a" style="left:292px;top:660px;width:719px;height:1px;background:#d4d0c8"></div>
<div class="a" style="left:292px;top:677px;width:719px;height:1px;background:#d4d0c8"></div>
<div class="pm p" style="left:299px;top:614px"><i></i><s></s></div>
<div class="pm p" style="left:299px;top:631px"><i></i><s></s></div>
<div class="ic pi_cat" style="left:315px;top:611px"><svg width="16" height="16" viewBox="0 0 16 16" style="display:block;overflow:visible"><path d="M2.500 2V12.500M2.500 4.500H6M2.500 8.500H6M2.500 12.500H6" stroke="#7a8aa8" fill="none"/><rect x="1" y="1" width="3" height="2.500" fill="#5a7ab8"/><rect x="5" y="3.500" width="3" height="2.500" fill="#5a7ab8"/><rect x="5" y="7.500" width="3" height="2.500" fill="#5a7ab8"/><rect x="5" y="11" width="3" height="2.500" fill="#5a7ab8"/><path d="M9 4.500H13M9 8.500H12M9 12.500H13" stroke="#8a98b0" stroke-dasharray="2 1"/></svg></div><div class="t" style="left:334px;top:613px;font-weight:bold;letter-spacing:0.47px">Errors (45 items)</div>
<div class="ic pi_cat" style="left:315px;top:628px"><svg width="16" height="16" viewBox="0 0 16 16" style="display:block;overflow:visible"><path d="M2.500 2V12.500M2.500 4.500H6M2.500 8.500H6M2.500 12.500H6" stroke="#7a8aa8" fill="none"/><rect x="1" y="1" width="3" height="2.500" fill="#5a7ab8"/><rect x="5" y="3.500" width="3" height="2.500" fill="#5a7ab8"/><rect x="5" y="7.500" width="3" height="2.500" fill="#5a7ab8"/><rect x="5" y="11" width="3" height="2.500" fill="#5a7ab8"/><path d="M9 4.500H13M9 8.500H12M9 12.500H13" stroke="#8a98b0" stroke-dasharray="2 1"/></svg></div><div class="t" style="left:334px;top:630px;font-weight:bold;letter-spacing:0.54px">Warnings (18 items)</div>
<div class="a chk" style="left:292px;top:693px;width:719px;height:16px"></div>
<div class="btn" style="left:292px;top:693px;width:16px;height:16px"><div class="a" style="left:4px;top:3px;border-top:4px solid transparent;border-bottom:4px solid transparent;border-right:4px solid #000"></div></div>
<div class="btn" style="left:308px;top:693px;width:391px;height:16px"></div>
<div class="btn" style="left:995px;top:693px;width:16px;height:16px"><div class="a" style="left:5px;top:3px;border-top:4px solid transparent;border-bottom:4px solid transparent;border-left:4px solid #000"></div></div>
</div>
<!-- STATUS -->
<div id="status">
<div class="a" style="left:11px;top:716px;width:3px;height:18px;border-left:1px solid #fff;border-top:1px solid #fff;border-right:1px solid #808080;border-bottom:1px solid #808080"></div>
<div class="ic" id="i_fastview" style="left:25px;top:717px"><svg width="16" height="16" viewBox="0 0 16 16" style="display:block;overflow:visible"><rect x="1.500" y="3.500" width="5" height="11" fill="#fdfdf8" stroke="#7a98c8"/><rect x="1" y="3" width="6" height="3" fill="#4a78c0"/><path d="M11.5 1.2000000000000002L12.5 3.5L14.8 4.5L12.5 5.5L11.5 7.8L10.5 5.5L8.2 4.5L10.5 3.5Z" fill="#ffe470" stroke="#b08828" stroke-width=".8"/></svg></div>
<div class="sep" style="left:500px"></div><div class="t" style="left:507px;top:719px">Writable</div>
<div class="sep" style="left:589px"></div><div class="t" style="left:596px;top:719px">Smart Insert</div>
<div class="sep" style="left:673px"></div><div class="t" style="left:680px;top:719px">37 : 1</div>
<div class="a" style="left:758px;top:716px;width:3px;height:18px;border-left:1px solid #fff;border-top:1px solid #fff;border-right:1px solid #808080;border-bottom:1px solid #808080"></div>
</div>
<!--REST_END-->
</div></body></html>
